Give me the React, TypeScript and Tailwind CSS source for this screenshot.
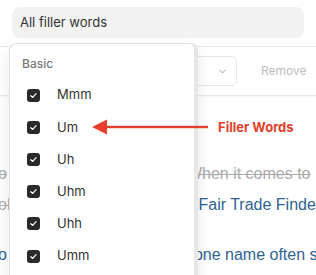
import { ChevronDown } from 'lucide-react';

const FILLERS = ['Mmm', 'Um', 'Uh', 'Uhm', 'Uhh', 'Umm'];

function Check() {
  return (
    <span className="flex h-[13px] w-[13px] items-center justify-center rounded-[3px] bg-[#2a2a2a]">
      <svg width="9" height="9" viewBox="0 0 12 12" fill="none">
        <path d="M2.5 6.3l2.4 2.3 4.6-5" stroke="white" strokeWidth="1.6" strokeLinecap="round" strokeLinejoin="round" />
      </svg>
    </span>
  );
}

export default function App() {
  return (
    <div className="relative h-[275px] w-[316px] overflow-hidden bg-white font-['Inter',sans-serif] text-[#333]">
      {/* page behind the menu */}
      <div className="px-3 pt-[7px]">
        <div className="flex h-[31px] items-center rounded-lg bg-[#f2f2f2] px-2 text-[13px] text-[#333]">
          All filler words
        </div>
      </div>

      <div className="mt-[8px] flex h-[50px] items-center border-y border-[#e8e8e8] shadow-[0_1px_2px_rgba(0,0,0,0.04)]">
        <div className="ml-[150px] flex h-[30px] w-[87px] items-center justify-end rounded-md border border-[#e6e6e6] pr-[8px]">
          <ChevronDown size={11} strokeWidth={1.6} className="text-[#777]" />
        </div>
        <span className="ml-[24px] text-[12px] text-[#bdbdbd]">Remove</span>
      </div>

      <div className="mt-[69px] flex flex-col overflow-hidden font-['Liberation_Sans',Arial,sans-serif] text-[16px] leading-[18px]">
        <div className="flex h-[18px] items-center whitespace-nowrap text-[#aaa] line-through">
          <span className="ml-[-2px]">o</span>
          <span className="ml-[180px]">When it comes to</span>
        </div>
        <div className="mt-[13px] flex h-[18px] items-center whitespace-nowrap">
          <span className="ml-[-2px] text-[#b0b0b0] line-through">ol</span>
          <span className="ml-[188px] text-[#2f6391]">Fair Trade Finde</span>
        </div>
        <div className="mt-[32px] flex h-[18px] items-center whitespace-nowrap text-[#2f6391]">
          <span className="ml-[-2px]">o</span>
          <span className="ml-[187px]">one name often s</span>
        </div>
      </div>

      {/* dropdown menu */}
      <div className="absolute left-[9px] top-[43px] h-[260px] w-[189px] rounded-lg border border-[#e2e2e2] border-r-[4px] border-r-[#e6e6e6] bg-white shadow-[0_4px_14px_rgba(0,0,0,0.10)]">
        <div className="pl-[12px] pt-[12px] text-[12px] font-medium leading-[16px] text-[#7a7a7a]">Basic</div>
        <div className="mt-[7px] flex flex-col">
          {FILLERS.map(w => (
            <div key={w} className="flex h-[32.2px] items-center">
              <span className="ml-[17px]"><Check /></span>
              <span className="ml-[17px] text-[13px] text-[#333]">{w}</span>
            </div>
          ))}
        </div>
      </div>

      {/* annotation */}
      <div className="absolute left-[92px] top-[119px] flex h-[16px] items-center">
        <svg width="116" height="16" viewBox="0 0 116 16">
          <path d="M0 8L15 0.5V15.5Z" fill="#e4402d" />
          <rect x="13" y="6.8" width="103" height="2.4" fill="#e4402d" />
        </svg>
      </div>
      <span className="absolute left-[218px] top-[118px] text-[13px] font-bold leading-[18px] text-[#e23e2b]">
        Filler Words
      </span>
    </div>
  );
}
